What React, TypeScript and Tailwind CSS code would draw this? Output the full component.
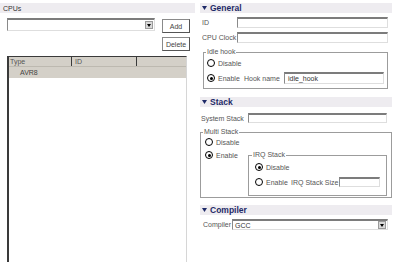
import React from 'react';

const inputCls =
  'bg-white border border-t-2 border-t-[#7c7c7c] border-l-[#8a8a8a] border-r-[#dedede] border-b-[#dedede]';

const Triangle: React.FC = () => (
  <svg width="5" height="4" viewBox="0 0 5 4" className="ml-[2px] mr-[3px]">
    <path d="M0 0h5L2.5 4z" fill="#1e2a68" />
  </svg>
);

const SectionHeader: React.FC<{ title: string; className?: string }> = ({ title, className = '' }) => (
  <div className={`h-[10px] bg-[#eeecf0] flex items-center ${className}`}>
    <Triangle />
    <span className="text-[8.5px] font-bold leading-none text-[#1e2a68]">{title}</span>
  </div>
);

const Radio: React.FC<{ checked?: boolean; label: string }> = ({ checked, label }) => (
  <div className="flex items-center h-[10px]">
    <span className="w-[8px] h-[8px] rounded-full border-[1.5px] border-black bg-white flex items-center justify-center">
      {checked && <span className="w-[3px] h-[3px] rounded-full bg-black" />}
    </span>
    <span className="ml-[3px]">{label}</span>
  </div>
);

const Combo: React.FC<{ value?: string; className?: string }> = ({ value = '', className = '' }) => (
  <div className={`${inputCls} flex items-center justify-between ${className}`}>
    <span className="pl-[2px] text-[#333]">{value}</span>
    <span className="w-[8px] h-[8px] mr-[1px] bg-[#d8d8d8] border border-[#9a9a9a] flex items-center justify-center">
      <svg width="4" height="3" viewBox="0 0 4 3">
        <path d="M0 0h4L2 3z" fill="#000" />
      </svg>
    </span>
  </div>
);

const Button: React.FC<{ label: string; className?: string }> = ({ label, className = '' }) => (
  <div
    className={`w-[28px] h-[14px] bg-white border border-[#8a8a8a] border-r-[#555] border-b-[#555] flex items-center justify-center text-[#444] ${className}`}
  >
    {label}
  </div>
);

export default function App() {
  return (
    <div className="w-[400px] h-[262px] bg-white flex overflow-hidden text-[7px] leading-none font-['Liberation_Sans',Arial,sans-serif] text-[#555]">
      {/* CPUs */}
      <div className="w-[200px] flex flex-col">
        <div className="mt-[3px] h-[10px] w-[195px] bg-[#eeecf0] flex items-center pl-[3px] text-[#333]">
          CPUs
        </div>
        <div className="flex items-start mt-[5px]">
          <Combo className="ml-[7px] w-[148px] h-[13px]" />
          <Button label="Add" className="ml-[7px] mt-[1px]" />
        </div>
        <Button label="Delete" className="ml-[162px] mt-[4px]" />
        <div className="ml-[7px] mt-[5px] w-[180px] flex-1 border-l-2 border-t border-l-[#3a3a3a] border-t-[#3a3a3a] border-r border-r-[#d6d6d6]">
          <div className="flex h-[10px] bg-[#d4d0c8] border-b border-b-[#bdb9b0]">
            <div className="w-[63px] border-r border-r-[#3a3a3a] pl-[1px] flex items-center">Type</div>
            <div className="w-[65px] border-r border-r-[#3a3a3a] pl-[3px] flex items-center">ID</div>
            <div className="flex-1" />
          </div>
          <div className="h-[11px] bg-[#d4d0c8] pl-[11px] flex items-center text-[#444]">AVR8</div>
        </div>
      </div>

      {/* properties */}
      <div className="w-[192px] flex flex-col">
        <SectionHeader title="General" className="mt-[3px]" />
        <div className="flex items-center mt-[4px] h-[11px]">
          <span className="w-[37px] pl-[2px]">ID</span>
          <div className={`${inputCls} w-[151px] h-[11px]`} />
        </div>
        <div className="flex items-center mt-[4px] h-[11px]">
          <span className="w-[37px] pl-[2px]">CPU Clock</span>
          <div className={`${inputCls} w-[151px] h-[11px]`} />
        </div>
        <fieldset className="mt-[4px] ml-[3px] w-[185px] border border-[#9c9c9c] px-[3px] pb-[4px]">
          <legend className="h-[10px] leading-[10px] px-[1px] -ml-[1px]">Idle hook</legend>
          <div className="mt-[1px]">
            <Radio label="Disable" />
          </div>
          <div className="flex items-center mt-[4px] h-[12px]">
            <div className="w-[37px]">
              <Radio checked label="Enable" />
            </div>
            <span className="w-[40px]">Hook name</span>
            <div className={`${inputCls} w-[100px] h-[12px] pl-[3px] flex items-center text-[#333]`}>idle_hook</div>
          </div>
        </fieldset>

        <SectionHeader title="Stack" className="mt-[8px]" />
        <div className="flex items-center mt-[6px] h-[10px]">
          <span className="w-[48px] pl-[1px]">System Stack</span>
          <div className={`${inputCls} w-[139px] h-[10px]`} />
        </div>
        <fieldset className="mt-[4px] w-[189px] border border-[#9c9c9c] px-[4px] pb-[1px]">
          <legend className="h-[10px] leading-[10px] px-[1px] -ml-[2px]">Multi Stack</legend>
          <Radio label="Disable" />
          <div className="flex items-start mt-[3px]">
            <div className="w-[43px]">
              <Radio checked label="Enable" />
            </div>
            <fieldset className="w-[136px] border border-[#9c9c9c] px-[6px] pb-[8px]">
              <legend className="h-[10px] leading-[10px] px-[1px] -ml-[3px]">IRQ Stack</legend>
              <div className="mt-[2px]">
                <Radio checked label="Disable" />
              </div>
              <div className="flex items-center mt-[5px] h-[10px]">
                <div className="w-[36px]">
                  <Radio label="Enable" />
                </div>
                <span className="w-[48px]">IRQ Stack Size</span>
                <div className={`${inputCls} w-[41px] h-[10px]`} />
              </div>
            </fieldset>
          </div>
        </fieldset>

        <SectionHeader title="Compiler" className="mt-[7px]" />
        <div className="flex items-center mt-[4px] h-[11px]">
          <span className="w-[32px] pl-[3px]">Compiler</span>
          <Combo value="GCC" className="w-[156px] h-[11px]" />
        </div>
      </div>
    </div>
  );
}
